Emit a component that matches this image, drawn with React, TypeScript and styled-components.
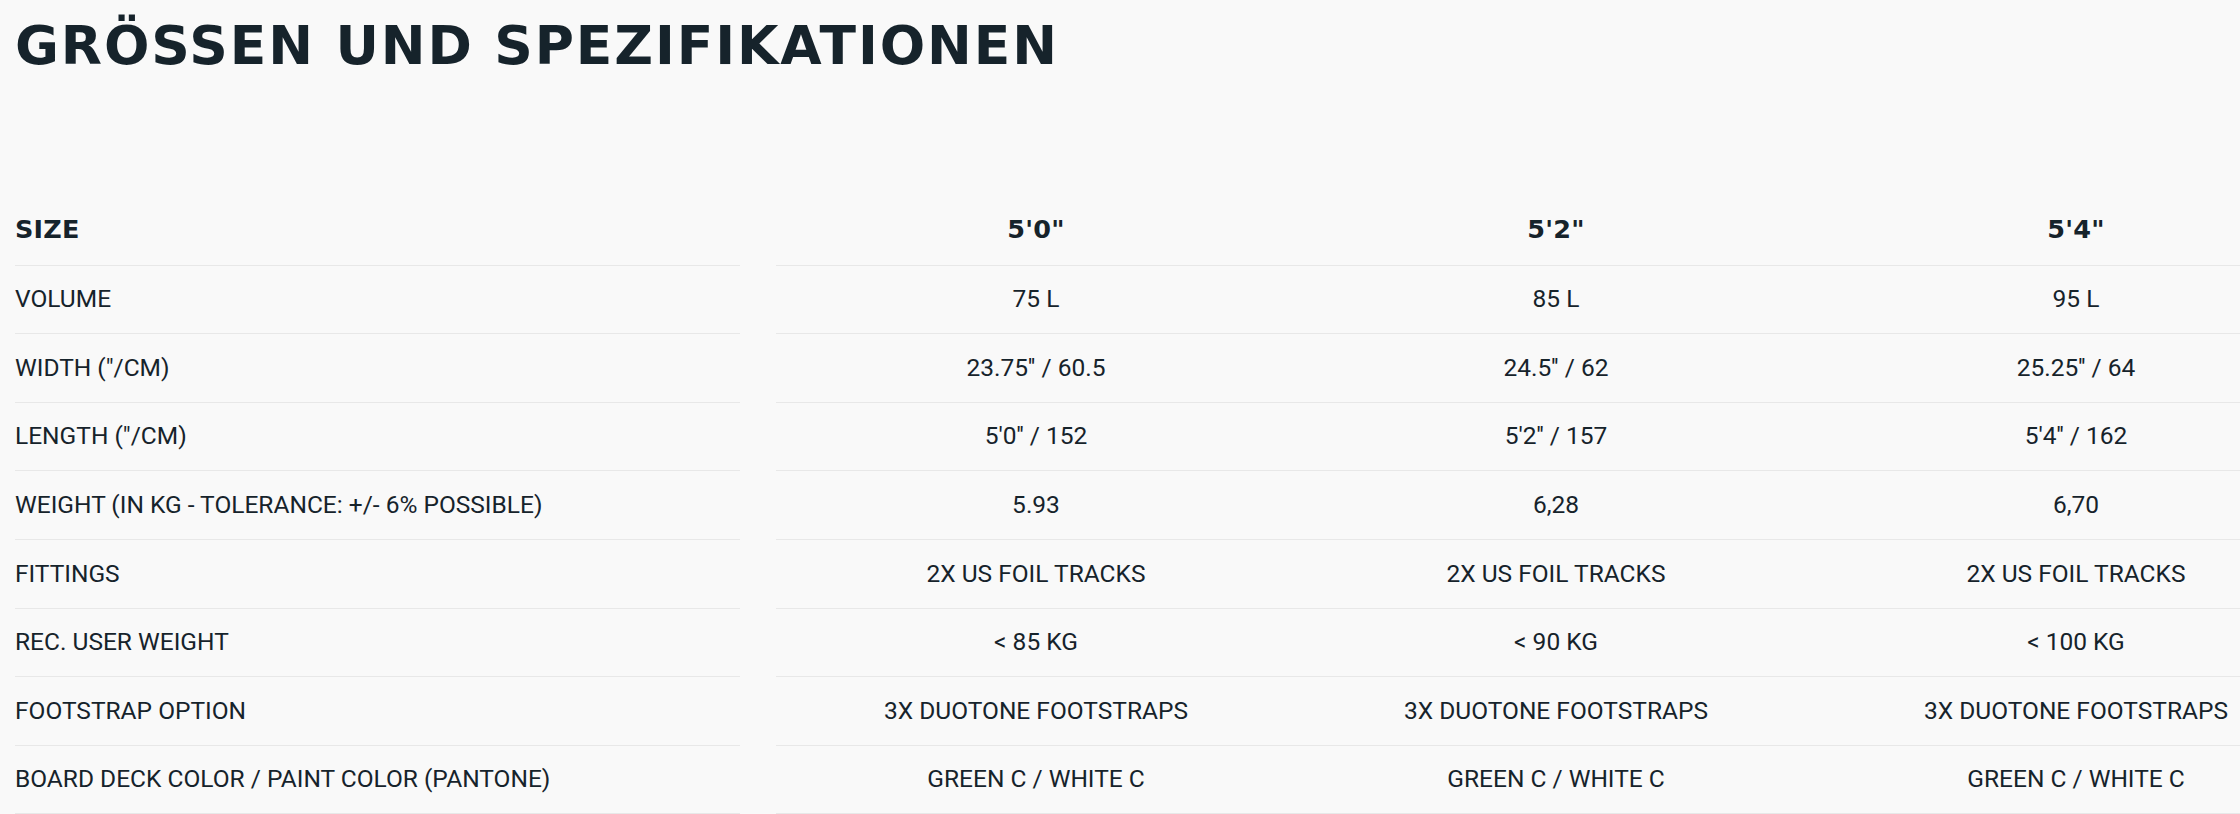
import React from "react";
import styled, { createGlobalStyle } from "styled-components";

const Global = createGlobalStyle`
  html, body {
    margin: 0;
    padding: 0;
    background: #f9f9f9;
    overflow: hidden;
  }
  body {
    font-family: Roboto, "Liberation Sans", sans-serif;
    color: #16232b;
  }
`;

const Page = styled.div`
  padding: 0 0 0 15px;
  box-sizing: border-box;
  width: 100%;
`;

const Title = styled.h2`
  margin: 0;
  padding-top: 16px;
  font-family: "DejaVu Sans", sans-serif;
  font-weight: 700;
  font-size: 53.5px;
  line-height: 60px;
  letter-spacing: 1.9px;
  color: #16232b;
`;

const TableScroller = styled.div`
  margin-top: 121px;
  width: 100%;
  overflow: hidden;
`;

const Table = styled.div`
  display: flex;
  flex-direction: column;
  width: max-content;
`;

const Row = styled.div`
  display: flex;
  align-items: stretch;
`;

const Cell = styled.div<{ $head?: boolean }>`
  box-sizing: border-box;
  height: 68.6px;
  border-bottom: 1px solid #e8e8e8;
  display: flex;
  align-items: center;
  padding-bottom: ${(p) => (p.$head ? "3px" : "1.5px")};
  font-family: ${(p) =>
    p.$head ? `"DejaVu Sans", sans-serif` : `Roboto, "Liberation Sans", sans-serif`};
  font-weight: ${(p) => (p.$head ? 700 : 400)};
  font-size: ${(p) => (p.$head ? "25.5px" : "24.5px")};
  letter-spacing: ${(p) => (p.$head ? "0.2px" : "0")};
  white-space: nowrap;
`;

const Label = styled(Cell)`
  width: 725px;
  margin-right: 36px;
`;

const Value = styled(Cell)`
  width: 520px;
  justify-content: center;
`;

const rows: [string, string, string, string][] = [
  ["VOLUME", "75 L", "85 L", "95 L"],
  ["WIDTH (\"/CM)", "23.75'' / 60.5", "24.5'' / 62", "25.25'' / 64"],
  ["LENGTH (\"/CM)", "5'0'' / 152", "5'2'' / 157", "5'4'' / 162"],
  ["WEIGHT (IN KG - TOLERANCE: +/- 6% POSSIBLE)", "5.93", "6,28", "6,70"],
  ["FITTINGS", "2X US FOIL TRACKS", "2X US FOIL TRACKS", "2X US FOIL TRACKS"],
  ["REC. USER WEIGHT", "< 85 KG", "< 90 KG", "< 100 KG"],
  [
    "FOOTSTRAP OPTION",
    "3X DUOTONE FOOTSTRAPS",
    "3X DUOTONE FOOTSTRAPS",
    "3X DUOTONE FOOTSTRAPS",
  ],
  [
    "BOARD DECK COLOR / PAINT COLOR (PANTONE)",
    "GREEN C / WHITE C",
    "GREEN C / WHITE C",
    "GREEN C / WHITE C",
  ],
];

export default function App() {
  return (
    <>
      <Global />
      <Page>
        <Title>GRÖSSEN UND SPEZIFIKATIONEN</Title>
        <TableScroller>
          <Table>
            <Row>
              <Label $head>SIZE</Label>
              <Value $head>5'0"</Value>
              <Value $head>5'2"</Value>
              <Value $head>5'4"</Value>
            </Row>
            {rows.map((r) => (
              <Row key={r[0]}>
                <Label>{r[0]}</Label>
                <Value>{r[1]}</Value>
                <Value>{r[2]}</Value>
                <Value>{r[3]}</Value>
              </Row>
            ))}
          </Table>
        </TableScroller>
      </Page>
    </>
  );
}
